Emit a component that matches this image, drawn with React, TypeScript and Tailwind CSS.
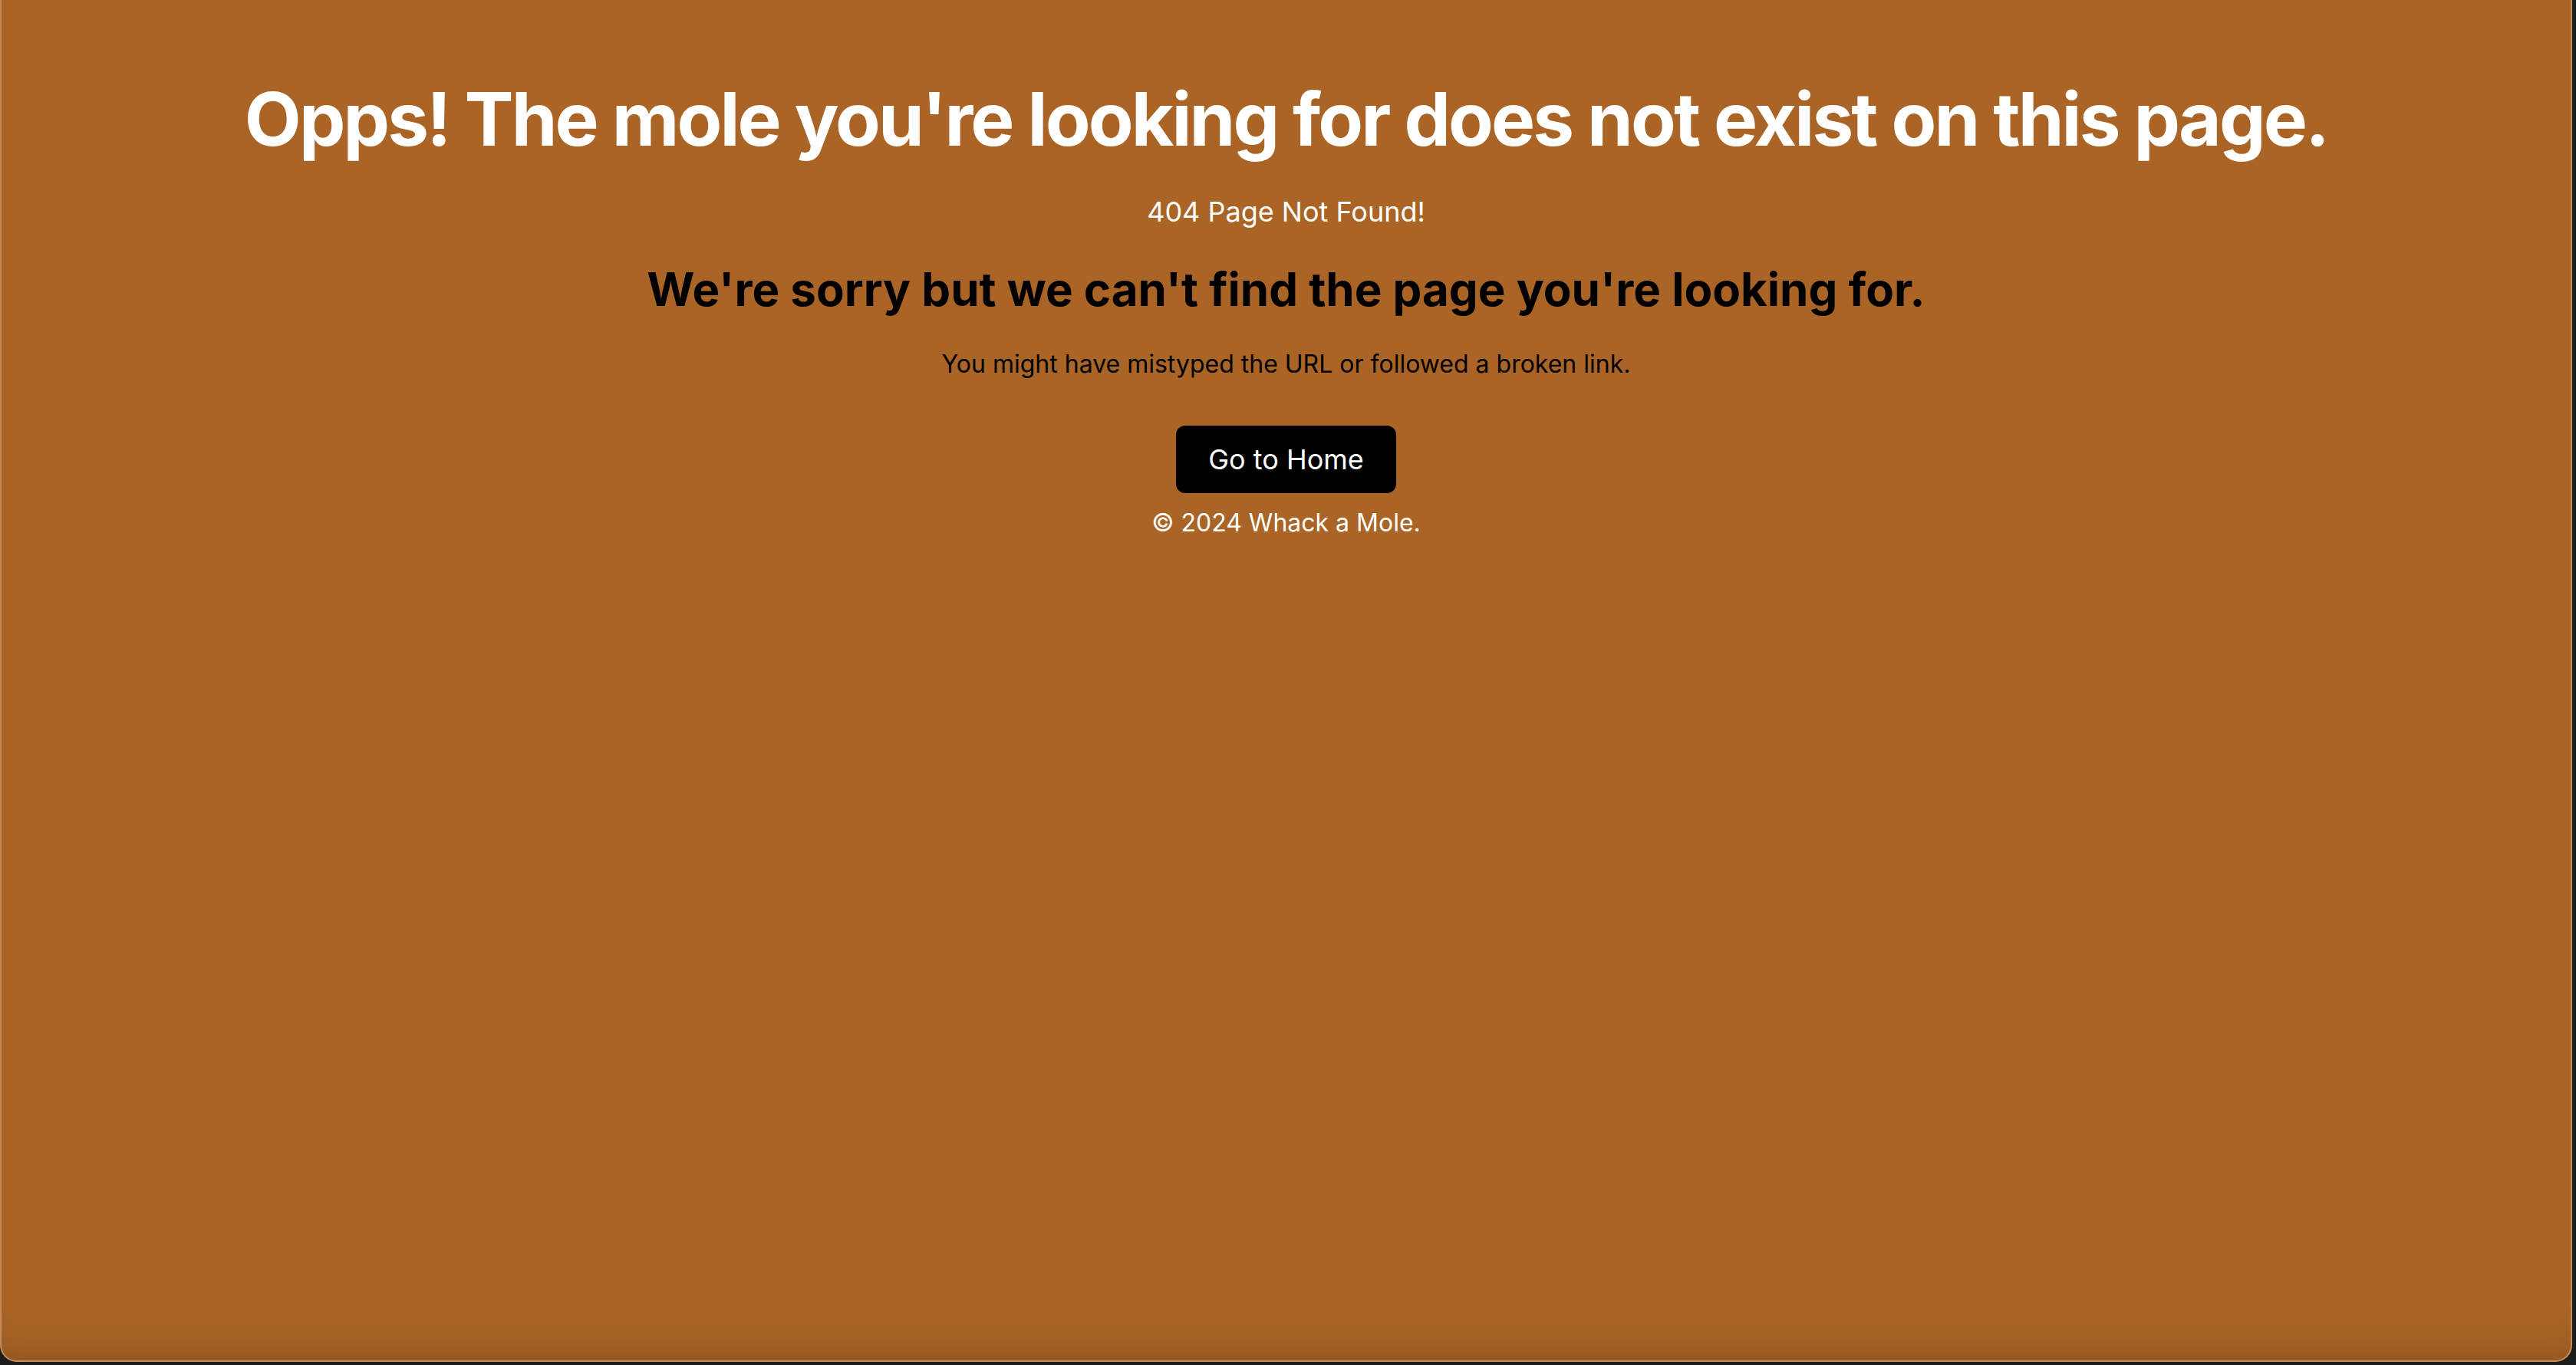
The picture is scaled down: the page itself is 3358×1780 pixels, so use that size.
import React from 'react';

const NotFound = () => {
  return (
    <div className="w-[3358px] h-[1780px] bg-[#1b1c1c] pr-[5px] pb-[4px] flex font-['Inter',sans-serif]">
      <div className="flex-1 flex flex-col items-center bg-[#a96426] border-l-2 border-r-2 border-b-2 border-[#c48d5c] rounded-b-[22px] shadow-[inset_0_-50px_45px_-40px_rgba(60,30,0,0.22)]">
        <h1 className="mt-[107px] text-[96px] leading-[96px] font-bold text-white tracking-[-0.03em]">
          Opps! The mole you're looking for does not exist on this page.
        </h1>
        <p className="mt-[45px] text-[36px] leading-[56px] text-white">404 Page Not Found!</p>
        <h2 className="mt-[37px] text-[60px] leading-[72px] font-bold text-black">
          We're sorry but we can't find the page you're looking for.
        </h2>
        <p className="mt-[38px] text-[32px] leading-[48px] text-black">
          You might have mistyped the URL or followed a broken link.
        </p>
        <button className="mt-[56px] px-[42px] py-4 text-[36px] leading-[56px] bg-black text-white rounded-[12px]">
          Go to Home
        </button>
        <footer className="mt-[15px] text-[32px] leading-[48px] text-white">© 2024 Whack a Mole.</footer>
      </div>
    </div>
  );
};

export default function App() {
  return <NotFound />;
}
